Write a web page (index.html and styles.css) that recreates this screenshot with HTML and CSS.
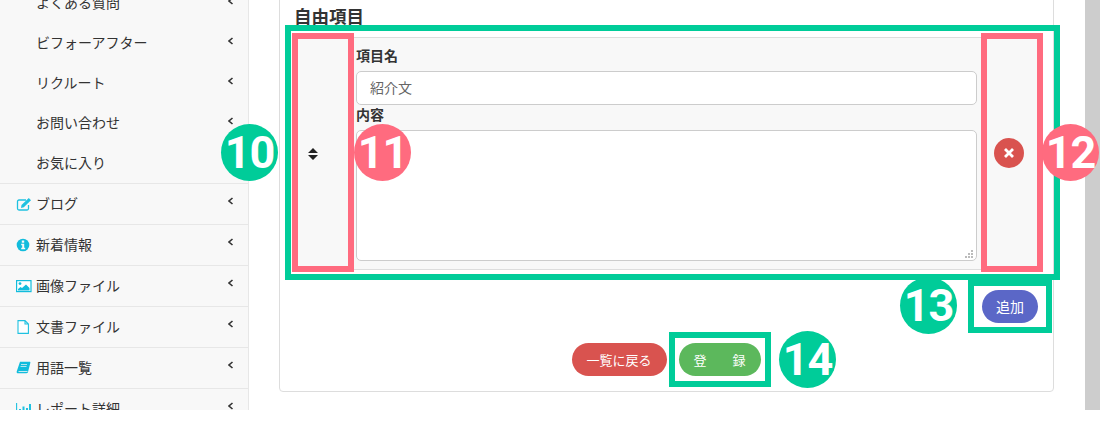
FILE: index.html
```html
<!DOCTYPE html>
<html lang="ja">
<head>
<meta charset="utf-8">
<title>自由項目</title>
<link rel="stylesheet" href="styles.css">
</head>
<body>
<svg class="defs" width="0" height="0" aria-hidden="true"><defs><path id="chev" d="M4.5 1 1 4l3.500 3" fill="none" stroke="#333" stroke-width="1.6"/></defs></svg>
<div class="app">
  <nav class="side">
    <ul class="subs">
      <li class="sub"><span>よくある質問</span><svg class="chev" viewBox="0 0 6 8"><use href="#chev"/></svg></li>
      <li class="sub"><span>ビフォーアフター</span><svg class="chev" viewBox="0 0 6 8"><use href="#chev"/></svg></li>
      <li class="sub"><span>リクルート</span><svg class="chev" viewBox="0 0 6 8"><use href="#chev"/></svg></li>
      <li class="sub"><span>お問い合わせ</span><svg class="chev" viewBox="0 0 6 8"><use href="#chev"/></svg></li>
      <li class="sub"><span>お気に入り</span></li>
    </ul>
    <ul class="mains">
      <li class="item">
        <svg class="ico" viewBox="0 0 16 14"><path d="M10 3H3a1.500 1.500 0 0 0-1.500 1.500v7A1.500 1.500 0 0 0 3 13h8a1.500 1.500 0 0 0 1.500-1.500V8" fill="none" stroke="#1fc1e0" stroke-width="1.300"/><path d="M5.500 8 12.800 1l2.200 2.200L7.800 10.300 5 11z" fill="#1fc1e0"/></svg>
        <span>ブログ</span><svg class="chev" viewBox="0 0 6 8"><use href="#chev"/></svg>
      </li>
      <li class="item">
        <svg class="ico" viewBox="0 0 16 14"><circle cx="7" cy="7" r="6.300" fill="#12bcdc"/><rect x="5.800" y="2.500" width="2.400" height="2.200" fill="#f8f8f8"/><path d="M5.200 5.800h3v4h1v1.400H5.200V9.800h1V7.200h-1z" fill="#f8f8f8"/></svg>
        <span>新着情報</span><svg class="chev" viewBox="0 0 6 8"><use href="#chev"/></svg>
      </li>
      <li class="item">
        <svg class="ico" viewBox="0 0 16 14"><rect x=".6" y="1.600" width="14.400" height="11" fill="#fff" stroke="#12bcdc" stroke-width="1.200"/><circle cx="4" cy="4.600" r="1.400" fill="#12bcdc"/><path d="M2 11.500V10l2.500-2 1.500 1 4-3.500 3.500 3.500v2.500z" fill="#12bcdc"/></svg>
        <span>画像ファイル</span><svg class="chev" viewBox="0 0 6 8"><use href="#chev"/></svg>
      </li>
      <li class="item">
        <svg class="ico" viewBox="0 0 16 14"><path d="M2 .6h7l3.400 3.400v9.400H2z M9 .6V4h3.400" fill="#fff" stroke="#1fc1e0" stroke-width="1.100"/></svg>
        <span>文書ファイル</span><svg class="chev" viewBox="0 0 6 8"><use href="#chev"/></svg>
      </li>
      <li class="item">
        <svg class="ico" viewBox="0 0 16 14"><path d="M4 .8h9.500c.8 0 1 .5.800 1.200l-2.300 9c-.2.800-.7 1.200-1.500 1.200H2c-1 0-1.600-.8-1.300-1.800z" fill="#12bcdc"/><path d="M2.500 10.500h9" stroke="#f8f8f8" stroke-width=".8"/><path d="M5 3.500h6M4.500 5.500h6" stroke="#f8f8f8" stroke-width=".7"/></svg>
        <span>用語一覧</span><svg class="chev" viewBox="0 0 6 8"><use href="#chev"/></svg>
      </li>
      <li class="item">
        <svg class="ico" viewBox="0 0 16 14"><path d="M.6 1v12H15" fill="none" stroke="#1fc1e0" stroke-width="1.100"/><path d="M3 7h2v5H3zM6.500 4.500h2V12h-2zM10 6h2v6h-2zM13 2h2v10h-2z" fill="#1fc1e0"/></svg>
        <span>レポート詳細</span><svg class="chev" viewBox="0 0 6 8"><use href="#chev"/></svg>
      </li>
    </ul>
  </nav>

  <main class="main">
    <section class="card">
      <h2 class="title">自由項目</h2>
      <div class="panel">
        <div class="handle">
          <svg class="sort" viewBox="0 0 10 12"><path d="M5 0 10 5H0zM5 12 0 7h10z" fill="#222"/></svg>
        </div>
        <div class="fields">
          <label class="label">項目名</label>
          <div class="input">紹介文</div>
          <label class="label label-next">内容</label>
          <div class="textarea">
            <svg class="grip" viewBox="0 0 8 8"><path d="M6 0h2v2H6zM3 3h2v2H3zM6 3h2v2H6zM0 6h2v2H0zM3 6h2v2H3zM6 6h2v2H6z" fill="#bbb"/></svg>
          </div>
        </div>
        <div class="remove">
          <button class="del" type="button"><svg viewBox="0 0 10 10" width="10" height="10"><path d="M1 1l8 8M9 1l-8 8" stroke="#fff" stroke-width="2.800"/></svg></button>
        </div>
      </div>
      <div class="add-row"><button class="btn btn-add" type="button">追加</button></div>
      <div class="actions">
        <button class="btn btn-back" type="button">一覧に戻る</button>
        <button class="btn btn-save" type="button">登　　録</button>
      </div>
    </section>
  </main>

  <div class="scroll"></div>

  <div class="mark mark-green box-panel"></div>
  <div class="mark mark-pink box-handle"></div>
  <div class="mark mark-pink box-remove"></div>
  <div class="mark mark-green box-add"></div>
  <div class="mark mark-green box-save"></div>
  <div class="num num-green n10">10</div>
  <div class="num num-pink n11">11</div>
  <div class="num num-pink n12">12</div>
  <div class="num num-green n13">13</div>
  <div class="num num-green n14">14</div>
</div>
</body>
</html>
```
FILE: styles.css
```css
* { box-sizing: border-box; }
html, body { margin: 0; padding: 0; background: #fff; }
body { font-family: "Noto Sans CJK JP", "Noto Sans", sans-serif; color: #333; font-size: 14px; }
.defs { position: absolute; }
ul { list-style: none; margin: 0; padding: 0; }

.app { position: relative; display: flex; width: 1100px; height: 410px; overflow: hidden; }

.side { width: 249px; flex: none; background: #f8f8f8; border-right: 1px solid #e7e7e7; }
.subs { margin-top: -18px; }
.sub { position: relative; height: 40px; padding: 1px 0 0 36px; line-height: 38px; white-space: nowrap; }
.mains { border-top: 1px solid #e7e7e7; margin-top: 1px; }
.item { position: relative; display: flex; align-items: center; height: 41px; padding-left: 16px; border-bottom: 1px solid #e7e7e7; white-space: nowrap; }
.item span { margin-left: 4px; position: relative; top: -1px; }
.ico { width: 16px; height: 14px; flex: none; }
.chev { position: absolute; left: 228px; top: 13px; width: 6px; height: 8px; }
.sub .chev { top: 15px; }

.main { width: 836px; flex: none; padding-left: 30px; }
.card { width: 775px; height: 402px; margin-top: -10px; border: 1px solid #ddd; border-radius: 4px; background: #fff; position: relative; }
.title { margin: 0; padding: 14px 0 0 14px; height: 46px; font-size: 17.5px; line-height: 22px; font-weight: 700; color: #333; }
.panel { display: flex; margin-left: 15px; width: 744px; height: 233px; background: #f8f8f8; border: 1px solid #ddd; border-radius: 3px; }
.handle { width: 60px; flex: none; display: flex; align-items: center; padding-left: 12px; }
.sort { width: 10px; height: 12px; margin-top: 1px; }
.fields { width: 621px; flex: none; }
.label { display: block; font-size: 14px; font-weight: 700; color: #333; line-height: 20px; }
.fields > .label:first-child { margin-top: 7px; }
.input { height: 34px; margin-top: 6px; padding-left: 13px; line-height: 30px; background: #fff; border: 1px solid #ccc; border-radius: 5px; color: #666; }
.label-next { margin-top: 0; height: 25px; line-height: 18px; }
.textarea { position: relative; height: 131px; background: #fff; border: 1px solid #ccc; border-radius: 5px; }
.grip { position: absolute; right: 3px; bottom: 2px; width: 8px; height: 8px; }
.remove { flex: 1; display: flex; align-items: center; justify-content: center; padding-left: 3px; }
.del { width: 30px; height: 30px; padding: 0; border: 0; border-radius: 50%; background: #d9534f; display: flex; align-items: center; justify-content: center; margin-top: -1px; }

.btn { height: 33px; padding: 0; border: 0; border-radius: 17px; color: #fff; font: 13px/31px "Noto Sans CJK JP", sans-serif; white-space: nowrap; }
.add-row { display: flex; justify-content: flex-end; padding: 20px 15px 0 0; }
.btn-add { width: 56px; background: #5b67c7; font-size: 14px; }
.actions { display: flex; justify-content: center; gap: 12px; margin-top: 20px; padding-right: 1px; }
.btn-back { width: 95px; background: #d9534f; }
.btn-save { width: 82px; background: #5cb85c; }

.scroll { width: 15px; flex: none; background: #cdcdcd; }

.mark { position: absolute; border-style: solid; border-width: 6px; }
.mark-green { border-color: #00cc99; }
.mark-pink { border-color: #ff6b7f; }
.box-panel { left: 285px; top: 25px; width: 775px; height: 255px; }
.box-handle { left: 292px; top: 33px; width: 62px; height: 239px; }
.box-remove { left: 981px; top: 33px; width: 62px; height: 239px; }
.box-add { left: 968px; top: 280px; width: 84px; height: 53px; }
.box-save { left: 669px; top: 332px; width: 102px; height: 55px; }

.num { position: absolute; width: 57px; height: 57px; border-radius: 50%; color: #fff; font-family: Roboto, sans-serif; font-weight: 700; font-size: 45px; letter-spacing: -1px; line-height: 57px; text-align: center; }
.num-green { background: #00cc99; }
.num-pink { background: #ff6b7f; }
.n10 { left: 221px; top: 124px; }
.n11 { left: 354px; top: 124px; }
.n12 { left: 1042px; top: 124px; }
.n13 { left: 900px; top: 277px; }
.n14 { left: 779px; top: 331px; }
```
